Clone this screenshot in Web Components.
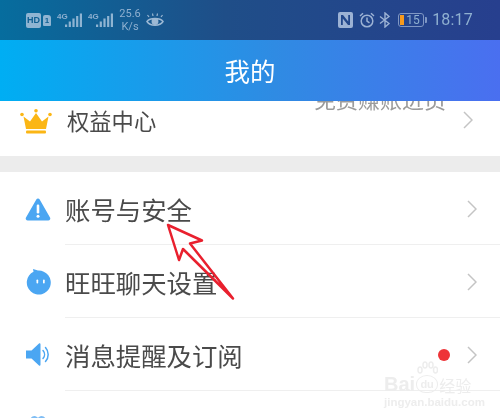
<!DOCTYPE html>
<html lang="zh">
<head>
<meta charset="utf-8">
<title>我的</title>
<style>
  html, body { margin: 0; height: 100%; background: #fff; }
  body { overflow: hidden; font-family: "Noto Sans CJK SC", "Liberation Sans", sans-serif; }
  svg { display: block; }
</style>
</head>
<body>
<phone-screen>
  <status-bar></status-bar>
  <title-bar>我的</title-bar>
  <setting-row first right-gap="27">
    <svg slot="icon" style="margin-left:20px" width="32" height="25" viewBox="0 0 32 25"><circle cx="2" cy="5.500" r="1.800" fill="#fbb615"/><circle cx="16" cy="1.800" r="1.800" fill="#fbb615"/><circle cx="30" cy="5.500" r="1.800" fill="#fbb615"/><path d="M3.500 7.500 10 12.500 16 4 22 12.500 28.500 7.500 26 20H6z" fill="#fbb615"/><rect x="6" y="21.500" width="20" height="3" rx="1" fill="#fbb615"/></svg>
    权益中心
    <span slot="note">免费赚账进员</span>
  </setting-row>
  <gray-band></gray-band>
  <setting-row>
    <svg slot="icon" style="margin-left:25px" width="26" height="24" viewBox="0 0 26 24"><path d="M13 1.500a2 2 0 0 1 1.700 1L25 20.500a2 2 0 0 1-1.700 3H2.700A2 2 0 0 1 1 20.500L11.300 2.500a2 2 0 0 1 1.700-1z" fill="#4ba6f2"/><rect x="11.700" y="7.500" width="2.600" height="9" rx="1.200" fill="#fff"/><circle cx="13" cy="19.300" r="1.500" fill="#fff"/></svg>
    账号与安全
  </setting-row>
  <setting-row>
    <svg slot="icon" style="margin-left:25px" width="26" height="26" viewBox="0 0 26 26"><path d="M8.500 2.800 8 0l5 1.600a12 12 0 1 1-4.500 1.200z" fill="#4ba6f2"/><rect x="11.500" y="10.500" width="1.700" height="4" rx=".8" fill="#fff"/><rect x="18" y="10.500" width="1.700" height="4" rx=".8" fill="#fff"/></svg>
    旺旺聊天设置
  </setting-row>
  <setting-row>
    <svg slot="icon" style="margin-left:26px" width="24" height="23" viewBox="0 0 24 23"><path d="M0 7.500h5.500L13 .5c.8-.6 1.500-.2 1.500.8v20.400c0 1-.7 1.400-1.500.8L5.500 15.500H0z" fill="#4ba6f2"/><path d="M17 7.500a6 6 0 0 1 0 8M19.500 4.500a10.500 10.500 0 0 1 0 14" fill="none" stroke="#4ba6f2" stroke-width="1.500" stroke-linecap="round"/></svg>
    消息提醒及订阅
    <span slot="dot"></span>
  </setting-row>
  <setting-row partial>
    <svg slot="icon" style="margin-left:30px" width="16" height="10" viewBox="0 0 16 10"><path d="M0 6c0-3 2-5 4.500-5C6 1 7.300 2 8 3c.7-1 2-2 3.500-2C14 1 16 3 16 6v4H0z" fill="#7fbdf4"/></svg>
  </setting-row>
  <baidu-mark></baidu-mark>
  <red-arrow></red-arrow>
</phone-screen>

<script>
class PhoneScreen extends HTMLElement {
  constructor() {
    super();
    this.attachShadow({ mode: "open" });
    this.shadowRoot.innerHTML = `
      <style>
        :host {
          display: flex;
          flex-direction: column;
          position: relative;
          width: 500px;
          height: 418px;
          overflow: hidden;
          background: #fff;
          filter: blur(0.35px);
        }
      </style>
      <slot></slot>`;
  }
}

class StatusBar extends HTMLElement {
  constructor() {
    super();
    this.attachShadow({ mode: "open" });
    const bars = `<svg width="17" height="15" viewBox="0 0 17 15" fill="#8fb4d2"><rect x="0" y="11.500" width="2.200" height="2.500"/><rect x="3.700" y="8.500" width="2.200" height="5.500"/><rect x="7.400" y="5.500" width="2.200" height="8.500"/><rect x="11.100" y="3" width="2.200" height="11"/><rect x="14.800" y="0.500" width="2.200" height="13.500"/></svg>`;
    this.shadowRoot.innerHTML = `
      <style>
        :host {
          display: flex;
          align-items: center;
          justify-content: space-between;
          box-sizing: border-box;
          height: 40px;
          padding: 0 27px 0 26px;
          color: #8fb0d0;
          background: linear-gradient(90deg, #066d9e, #1f4e88 45%, #273f8e);
          font-family: "Roboto", "Liberation Sans", sans-serif;
        }
        .side { display: flex; align-items: center; }
        .hd {
          width: 15px; height: 15px; border-radius: 2px; background: #8fb4d2; color: #0f5f92;
          font: 700 9px/15px "Liberation Sans", sans-serif; text-align: center;
        }
        .sim {
          width: 8px; height: 11px; margin-left: 2px; border-radius: 2px 3px 1px 1px; background: #8fb4d2; color: #0f5f92;
          font: 700 8px/11px "Liberation Sans", sans-serif; text-align: center;
        }
        .net { display: flex; align-items: flex-end; height: 16px; margin-left: 6px; }
        .net b { align-self: flex-start; width: 8px; font: 700 8px/9px "Liberation Sans", sans-serif; }
        .speed { width: 24px; margin-left: 5px; font-size: 11px; line-height: 13px; text-align: center; }
        .clock { margin-left: 5px; font-size: 16px; letter-spacing: .2px; line-height: 20px; }
        .battery {
          display: flex; align-items: center; box-sizing: border-box; width: 26px; height: 14px; margin-left: 7px;
          border: 1px solid #7f97c4; border-radius: 3px; font-size: 12px; line-height: 12px;
        }
        .battery i { width: 4px; height: 10px; margin: 0 2px 0 1px; background: #f79a1c; }
        .nub { width: 2px; height: 6px; margin-left: 1px; border-radius: 0 1px 1px 0; background: #7f97c4; }
      </style>
      <div class="side">
        <span class="hd">HD</span><span class="sim">1</span>
        <span class="net"><b>4G</b>${bars}</span>
        <span class="net"><b>4G</b>${bars}</span>
        <span class="speed">25.6<br>K/s</span>
        <svg style="margin-left:4px" width="18" height="15" viewBox="0 0 18 15" fill="none" stroke="#9db9d4" stroke-width="1.500"><path d="M1 8.500C4 4.500 14 4.500 17 8.500 14 13.500 4 13.500 1 8.500z"/><circle cx="9" cy="8.500" r="2.700" fill="#9db9d4"/><path d="M3 4 1.500 2M7 3 6.500.5M11 3l.5-2.500M15 4l1.500-2" stroke-width="1.200"/></svg>
      </div>
      <div class="side">
        <svg width="15" height="16" viewBox="0 0 15 16"><path fill-rule="evenodd" fill="#9cb2d4" d="M2 0h11a2 2 0 0 1 2 2v12a2 2 0 0 1-2 2H2a2 2 0 0 1-2-2V2a2 2 0 0 1 2-2zM3 3v10h1.800V6.500L10 13h2V3h-1.800v6.500L5 3z"/></svg>
        <svg style="margin-left:6px" width="16" height="16" viewBox="0 0 16 16" fill="none" stroke="#9cb2d4" stroke-width="1.500"><circle cx="8" cy="9" r="5.800"/><path d="M8 5.500V9l2.500 1.800M1 4 4 1.300M15 4l-3-2.700"/></svg>
        <svg style="margin-left:4px" width="12" height="16" viewBox="0 0 12 16" fill="none" stroke="#9cb2d4" stroke-width="1.400"><path d="M1 4.500 10 11.500 6 15V1l4 3.500-9 7"/></svg>
        <span class="battery"><i></i>15</span><span class="nub"></span>
        <span class="clock">18:17</span>
      </div>`;
  }
}

class TitleBar extends HTMLElement {
  constructor() {
    super();
    this.attachShadow({ mode: "open" });
    this.shadowRoot.innerHTML = `
      <style>
        :host {
          display: flex;
          align-items: center;
          justify-content: center;
          flex: none;
          height: 61px;
          padding-bottom: 2px;
          box-sizing: border-box;
          color: #fff;
          font-size: 25.500px;
          background: linear-gradient(90deg, #00aef3, #2f8be3 55%, #4a6ff0);
        }
      </style>
      <slot></slot>`;
  }
}

class SettingRow extends HTMLElement {
  constructor() {
    super();
    this.attachShadow({ mode: "open" });
    const gap = this.getAttribute("right-gap") || "23";
    this.shadowRoot.innerHTML = `
      <style>
        :host {
          display: block;
          flex: none;
          height: 73px;
          overflow: hidden;
          color: #4a4a4a;
          font-size: 25.400px;
        }
        :host([first]) { height: 55px; font-size: 22.300px; }
        :host([partial]) { height: 27px; }
        .line { display: flex; align-items: center; height: 100%; }
        :host([partial]) .line { align-items: flex-start; }
        .icon { display: flex; flex: none; width: 65px; }
        :host([first]) .icon { width: 67px; padding-bottom: 15px; }
        :host([partial]) .icon { margin-top: 24px; }
        .body {
          display: flex;
          align-items: center;
          flex: 1;
          align-self: stretch;
          box-sizing: border-box;
          padding: 2px ${gap}px 0 0;
          border-bottom: 1px solid #efefef;
          line-height: 30px;
        }
        :host([first]) .body { border-bottom: none; padding-top: 0; padding-bottom: 17px; }
        :host([partial]) .body { border-bottom: none; }
        .title { flex: 1; }
        ::slotted([slot="note"]) {
          align-self: flex-start;
          margin: -18px 17px 0 0;
          color: #9b9b9b;
          font-size: 22px;
        }
        ::slotted([slot="dot"]) {
          width: 12px;
          height: 12px;
          margin-right: 17px;
          border-radius: 50%;
          background: #ee3438;
        }
        .chevron { flex: none; }
        :host([partial]) .chevron { display: none; }
      </style>
      <div class="line">
        <div class="icon"><slot name="icon"></slot></div>
        <div class="body">
          <span class="title"><slot></slot></span>
          <slot name="note"></slot>
          <slot name="dot"></slot>
          <svg class="chevron" width="10" height="18" viewBox="0 0 10 18" fill="none" stroke="#c4c4c4" stroke-width="1.500"><path d="M1 1l8 8-8 8"/></svg>
        </div>
      </div>`;
  }
}

class GrayBand extends HTMLElement {
  constructor() {
    super();
    this.attachShadow({ mode: "open" });
    this.shadowRoot.innerHTML = `<style>:host { display: block; flex: none; height: 16px; background: #ececec; }</style>`;
  }
}

class RedArrow extends HTMLElement {
  constructor() {
    super();
    this.attachShadow({ mode: "open" });
    this.shadowRoot.innerHTML = `
      <style>:host { position: absolute; left: 0; top: 0; pointer-events: none; }</style>
      <svg width="500" height="418" viewBox="0 0 500 418" style="display:block">
        <path d="M168 225 202 240.500 190 243.500 233 298.500 183 249 179 260z" fill="none" stroke="#e9202e" stroke-width="2.500" stroke-linejoin="round"/>
      </svg>`;
  }
}

// pale watermark over the last rows
class BaiduMark extends HTMLElement {
  constructor() {
    super();
    this.attachShadow({ mode: "open" });
    this.shadowRoot.innerHTML = `
      <style>
        :host {
          position: absolute;
          left: 384px;
          top: 364px;
          width: 92px;
          height: 50px;
          color: #ededed;
          font-family: "Liberation Sans", sans-serif;
        }
        .top { display: flex; align-items: flex-end; height: 31px; font-size: 20px; font-weight: 700; line-height: 22px; }
        .du { position: relative; display: flex; align-items: center; justify-content: center; width: 22px; height: 18px; margin: 0 1px 2px 1px; border-radius: 50% 50% 45% 45%; border: 1.500px solid #ededed; box-sizing: border-box; font-size: 11px; }
        .paw { position: absolute; left: 0; top: -15px; }
        .cn { font: 400 16px/20px "Noto Sans CJK SC", sans-serif; }
        .url { margin-top: 0; font-size: 11.500px; font-weight: 700; line-height: 15px; white-space: nowrap; }
      </style>
      <div class="top">Bai<span class="du"><svg class="paw" width="21" height="14" viewBox="0 0 21 14" fill="none" stroke="#ededed" stroke-width="1.500"><ellipse cx="3" cy="9" rx="2" ry="3"/><ellipse cx="8" cy="4" rx="2" ry="3"/><ellipse cx="14" cy="4" rx="2" ry="3"/><ellipse cx="18.500" cy="9" rx="2" ry="3"/></svg>du</span><span class="cn">经验</span></div>
      <div class="url">jingyan.baidu.com</div>`;
  }
}

customElements.define("phone-screen", PhoneScreen);
customElements.define("status-bar", StatusBar);
customElements.define("title-bar", TitleBar);
customElements.define("setting-row", SettingRow);
customElements.define("gray-band", GrayBand);
customElements.define("red-arrow", RedArrow);
customElements.define("baidu-mark", BaiduMark);
</script>
</body>
</html>
